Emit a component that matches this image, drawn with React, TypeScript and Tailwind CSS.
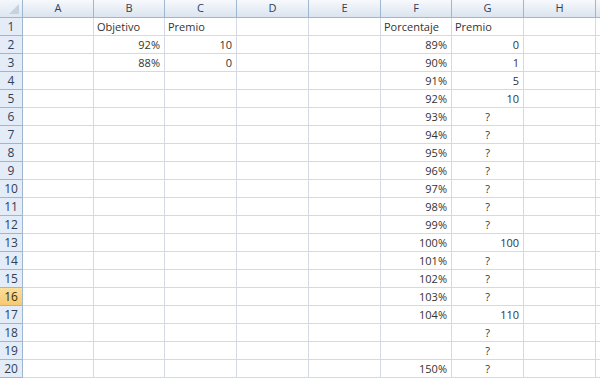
import React from "react"

const cols = ["A", "B", "C", "D", "E", "F", "G", "H", ""]
const widths = ["w-[71px]", "w-[71px]", "w-[72px]", "w-[72px]", "w-[72px]", "w-[71px]", "w-[72px]", "w-[72px]", "w-[20px]"]

type Cell = { v: string; align?: "l" | "r" | "c" }

const rows: Record<number, Record<string, Cell>> = {
  1: { B: { v: "Objetivo", align: "l" }, C: { v: "Premio", align: "l" }, F: { v: "Porcentaje", align: "l" }, G: { v: "Premio", align: "l" } },
  2: { B: { v: "92%" }, C: { v: "10" }, F: { v: "89%" }, G: { v: "0" } },
  3: { B: { v: "88%" }, C: { v: "0" }, F: { v: "90%" }, G: { v: "1" } },
  4: { F: { v: "91%" }, G: { v: "5" } },
  5: { F: { v: "92%" }, G: { v: "10" } },
  6: { F: { v: "93%" }, G: { v: "?", align: "c" } },
  7: { F: { v: "94%" }, G: { v: "?", align: "c" } },
  8: { F: { v: "95%" }, G: { v: "?", align: "c" } },
  9: { F: { v: "96%" }, G: { v: "?", align: "c" } },
  10: { F: { v: "97%" }, G: { v: "?", align: "c" } },
  11: { F: { v: "98%" }, G: { v: "?", align: "c" } },
  12: { F: { v: "99%" }, G: { v: "?", align: "c" } },
  13: { F: { v: "100%" }, G: { v: "100" } },
  14: { F: { v: "101%" }, G: { v: "?", align: "c" } },
  15: { F: { v: "102%" }, G: { v: "?", align: "c" } },
  16: { F: { v: "103%" }, G: { v: "?", align: "c" } },
  17: { F: { v: "104%" }, G: { v: "110" } },
  18: { G: { v: "?", align: "c" } },
  19: { G: { v: "?", align: "c" } },
  20: { F: { v: "150%" }, G: { v: "?", align: "c" } },
}

const alignClass = { l: "justify-start pl-[3px]", r: "justify-end pr-[4px]", c: "justify-center" }

export default function App() {
  const nums = Array.from({ length: 20 }, (_, i) => i + 1)
  return (
    <div className="w-[600px] h-[379px] overflow-hidden bg-white text-[11px] text-[#333]" style={{ fontFamily: '"Open Sans", "Liberation Sans", sans-serif' }}>
      <div className="flex h-[18px] border-b border-[#9eb6ce]">
        <div className="w-[23px] shrink-0 bg-linear-to-b from-[#f4f7fb] to-[#dde6f1] border-r border-[#9eb6ce] relative">
          <div className="absolute right-[3px] bottom-[3px] w-0 h-0 border-l-[10px] border-l-transparent border-b-[10px] border-b-[#c5d2e2]" />
        </div>
        {cols.map((c, i) => (
          <div key={i} className={`${widths[i]} shrink-0 flex items-center justify-center bg-linear-to-b from-[#f7f9fc] to-[#dbe4f0] border-r border-[#9eb6ce] text-[#2f415a] text-[11px]`}>
            {c}
          </div>
        ))}
      </div>
      {nums.map((n) => (
        <div key={n} className="flex h-[18px]">
          <div className={`w-[23px] shrink-0 flex items-center justify-center border-r border-b border-[#9eb6ce] text-[12px] ${n === 16 ? "bg-linear-to-b from-[#fbdf9c] to-[#f7c96f] text-[#3a2f10]" : "bg-[#e4ecf7] text-[#2f415a]"}`}>
            {n}
          </div>
          {cols.map((c, i) => {
            const cell = c ? rows[n]?.[c] : undefined
            return (
              <div key={i} className={`${widths[i]} shrink-0 flex items-center pt-[1px] border-r border-b border-[#d3dae6] ${alignClass[cell?.align ?? "r"]}`}>
                {cell?.v}
              </div>
            )
          })}
        </div>
      ))}
    </div>
  )
}
